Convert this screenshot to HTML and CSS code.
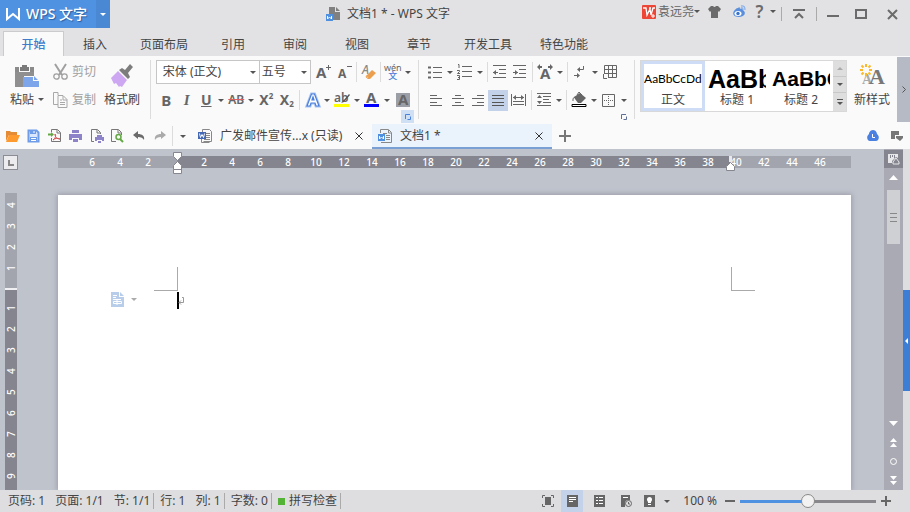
FILE: index.html
```html
<!DOCTYPE html>
<html lang="zh-CN">
  <head>
    <meta charset="UTF-8" />
    <meta name="viewport" content="width=device-width, initial-scale=1.0" />
    <title>文档1 * - WPS 文字</title>
    <link rel="stylesheet" href="styles.css">
  </head>
  <body>
    <header class="header">
      <div class="titlebar">
        <button class="brand">
          <svg width="14" height="12" viewBox="0 0 14 12"><path d="M1 0v11l6-5 6 5V0" fill="none" stroke="#fff" stroke-width="2"/></svg>
          WPS 文字
        </button>
        <button class="brand-menu drop" aria-label="菜单"></button>
        <div class="title">
          <svg width="14" height="14" viewBox="0 0 14 14"><path d="M3 0h6v5h5v8H3z" fill="#808080"/><path d="M10 0l4 4h-4z" fill="#808080"/><path d="M0 7h7v7H0z" fill="#4f91e0"/><path d="M1.500 9v3l2-2 2 2V9" fill="none" stroke="#fff"/></svg>
          <span>文档1 * - WPS 文字</span>
        </div>
        <div class="tools">
          <svg class="raised" width="14" height="14" viewBox="0 0 14 14"><rect width="14" height="14" rx="1" fill="#ee4636"/><path d="M1 3h3l1 7 3-6 1 6 2-7h2M7 3h2" fill="none" stroke="#fff" stroke-width="1.300"/><path d="M9 11h4M11 9v4" stroke="#fff"/></svg>
          <button class="user raised">袁远尧</button>
          <button class="drop raised" aria-label="账号"></button>
          <button class="raised" aria-label="皮肤"><svg width="13" height="12" viewBox="0 0 13 12"><path d="M3 0h2q1.500 2 3 0h2l3 3-2 3-1-1v7H3V5L2 6 0 3z" fill="#6b6b6b"/></svg></button>
          <button class="raised" aria-label="微博"><svg width="13" height="13" viewBox="0 0 13 13"><path d="M5 3c1-1 2-1 2 1 2-1 3 0 3 1 4 3 1 7-4 7C1 12-1 9 1 6c1-1 2-3 4-3z" fill="#5a8fdd"/><ellipse cx="5" cy="8.500" rx="3.500" ry="2.500" fill="#fff"/><circle cx="5" cy="8.500" r="1.700" fill="#3873cc"/><path d="M8 1q4-1 4 4M8 3q2-1 2 2" fill="none" stroke="#8db3ea" stroke-width="1.300"/></svg></button>
          <button class="help raised">?</button>
          <button class="drop raised" aria-label="帮助"></button>
          <i class="bar"></i>
          <button aria-label="收起功能区"><svg width="12" height="10" viewBox="0 0 12 10"><path d="M0 1h12M2 9l4-4 4 4" fill="none" stroke="#6b6b6b" stroke-width="2"/></svg></button>
          <i class="bar"></i>
          <button aria-label="最小化"><svg width="12" height="6" viewBox="0 0 12 6"><path d="M0 4h12v2H0z" fill="#6b6b6b"/></svg></button>
          <button aria-label="最大化"><svg width="12" height="10" viewBox="0 0 12 10"><path d="M1 1h10v8H1z" fill="none" stroke="#6b6b6b" stroke-width="2"/></svg></button>
          <button aria-label="关闭"><svg width="11" height="11" viewBox="0 0 11 11"><path d="M1 1l9 9M10 1l-9 9" stroke="#6b6b6b" stroke-width="2"/></svg></button>
        </div>
      </div>
      <nav class="tabs">
        <a href="#" class="active">开始</a>
        <a href="#">插入</a>
        <a href="#">页面布局</a>
        <a href="#">引用</a>
        <a href="#">审阅</a>
        <a href="#">视图</a>
        <a href="#">章节</a>
        <a href="#">开发工具</a>
        <a href="#">特色功能</a>
      </nav>
    </header>

    <section class="ribbon">
      <div class="group clipboard">
        <button class="big">
          <svg width="24" height="24" viewBox="0 0 24 24"><path d="M0 3h4v5h11V3h4v9H9v11H0z" fill="#8a8a8a"/><path d="M0 8h19v4H8v11H0z" fill="#8f8f8f"/><path d="M5 3h2V1h5v2h2v4H5z" fill="#7a7a7a"/><path d="M8 13h10v4h6v6H8z" fill="#7da5ea"/><path d="M19 12l4 4h-4z" fill="#7da5ea"/></svg>
          <span>粘贴<i class="caret"></i></span>
        </button>
        <div class="stack">
          <button class="small"><svg width="15" height="16" viewBox="0 0 15 16"><path d="M2 0l7 11M13 0L6 11" stroke="#a0a0a0" stroke-width="2"/><g fill="none" stroke="#a0a0a0" stroke-width="1.300"><circle cx="3.500" cy="12.500" r="2.700"/><circle cx="11.500" cy="12.500" r="2.700"/></g></svg>剪切</button>
          <button class="small"><svg width="15" height="16" viewBox="0 0 15 16"><path d="M5 3V.5H.5v12H5M5 3.500h5l4 4v8H5zM10 4v4h4M7 8h2M7 10.500h5M7 12.500h5" fill="none" stroke="#a8a8a8"/></svg>复制</button>
        </div>
        <button class="big">
          <svg width="24" height="24" viewBox="0 0 24 24"><path d="M9 6l3-2 3 2 5-6 3 3-5 6 2 4-2 2z" fill="#7d7d7d"/><path d="M8 7l9 9-5 7-2-1-1 1-3-4-2 1-3-6z" fill="#cda7f2"/></svg>
          <span>格式刷</span>
        </button>
      </div>

      <div class="group font">
        <div class="row font-top">
          <label class="combo"><select aria-label="字体"><option>宋体 (正文)</option></select></label>
          <label class="combo size"><select aria-label="字号"><option>五号</option></select></label>
          <button aria-label="增大字号"><svg width="16" height="16" viewBox="0 0 16 16"><text x="0" y="14" class="glyph">A</text><path d="M10 3.500h5M12.500 1v5" stroke="#666"/></svg></button>
          <button aria-label="减小字号"><svg width="16" height="16" viewBox="0 0 16 16"><text x="1" y="14" class="glyph sm">A</text><path d="M10 2.500h5" stroke="#666"/></svg></button>
          <i class="sep"></i>
          <button aria-label="清除格式"><svg width="16" height="16" viewBox="0 0 16 16"><text x="1" y="10" class="glyph sm light">A</text><path d="M5 12l6-6 4 3-6 6H7z" fill="#eca04f"/><path d="M5.500 12l3 2.500H7l-2-1.500z" fill="#fff" stroke="#eca04f"/></svg></button>
          <i class="sep"></i>
          <button class="pinyin"><span>wén</span><b>文</b></button>
          <button class="drop" aria-label="拼音"></button>
        </div>
        <div class="row font-bottom">
          <button class="letter">B</button>
          <button class="letter italic">I</button>
          <button class="letter under">U</button>
          <button class="drop" aria-label="下划线"></button>
          <button class="strike">AB</button>
          <button class="drop" aria-label="删除线"></button>
          <button class="letter script">X<sup>2</sup></button>
          <button class="letter script">X<sub>2</sub></button>
          <i class="sep"></i>
          <button aria-label="文字效果"><svg width="16" height="16" viewBox="0 0 16 16"><path d="M2 14L6.500 2h3L14 14h-3l-1-3H6l-1 3zM7 8h2L8 5z" fill="#fff" stroke="#a8c4f2" stroke-width="3"/><path d="M2 14L6.500 2h3L14 14h-3l-1-3H6l-1 3zM7 8h2L8 5z" fill="#fff" stroke="#4a7edb" stroke-width="1.200"/></svg></button>
          <button class="drop" aria-label="效果选项"></button>
          <button aria-label="突出显示"><svg width="16" height="16" viewBox="0 0 16 16"><text x="0" y="10" class="glyph ab">ab</text><path d="M15 2l-6 7-2 2 3-1 6-7z" fill="#555"/><path d="M0 12h15v3H0z" fill="#ff0"/></svg></button>
          <button class="drop" aria-label="突出显示颜色"></button>
          <button aria-label="字体颜色"><svg width="16" height="16" viewBox="0 0 16 16"><text x="2" y="11" class="glyph">A</text><path d="M0 12h15v3H0z" fill="#00f"/></svg></button>
          <button class="drop" aria-label="颜色选项"></button>
          <button aria-label="字符底纹"><svg width="14" height="14" viewBox="0 0 14 14"><path d="M0 0h14v14H0z" fill="#9b9fa5"/><text x="2" y="12" class="glyph">A</text></svg></button>
        </div>
        <button class="launcher on" aria-label="字体设置"><svg width="6" height="6" viewBox="0 0 6 6"><path d="M.5 5V.5H5M2.500 5.500h3v-3" fill="none" stroke="#4a83dd"/></svg></button>
      </div>

      <div class="group para">
        <div class="row para-top">
          <button aria-label="项目符号"><svg width="14" height="14" viewBox="0 0 14 14"><path d="M0 2.500h3M0 7.500h3M0 12.500h3" stroke="#666" stroke-width="2"/><path d="M5 2.500h9M5 7.500h9M5 12.500h9" stroke="#666"/></svg></button>
          <button class="drop" aria-label="符号选项"></button>
          <button aria-label="编号"><svg width="15" height="16" viewBox="0 0 15 16"><path d="M1 .5h1V4M0 6.500h2.500v1L.5 9.500H3M0 11.500h2.500v4H0M1 13.500h1" fill="none" stroke="#666"/><path d="M5 2.500h10M5 7.500h10M5 12.500h10" stroke="#666"/></svg></button>
          <button class="drop" aria-label="编号选项"></button>
          <i class="sep"></i>
          <button aria-label="减少缩进"><svg width="13" height="14" viewBox="0 0 13 14"><path d="M0 .5h13M6 4.500h7M6 8.500h7M0 12.500h13M0 7.500h5" stroke="#666"/><path d="M3 5v5L0 7.500z" fill="#666"/></svg></button>
          <button aria-label="增加缩进"><svg width="13" height="14" viewBox="0 0 13 14"><path d="M0 .5h13M6 4.500h7M6 8.500h7M0 12.500h13M0 7.500h5" stroke="#666"/><path d="M2 5v5l3-2.500z" fill="#666"/></svg></button>
          <i class="sep"></i>
          <button aria-label="中文版式"><svg width="16" height="16" viewBox="0 0 16 16"><text x="3" y="15" class="glyph">A</text><path d="M0 3l3-3v2h2v2H3v2zM16 3l-3-3v2h-2v2h2v2z" fill="#666"/></svg></button>
          <button class="drop" aria-label="版式选项"></button>
          <i class="sep"></i>
          <button aria-label="显示段落标记"><svg width="12" height="14" viewBox="0 0 12 14"><path d="M9.500 1v3.500H4M0 10.500h5" fill="none" stroke="#666"/><path d="M6 2v5L3 4.500zM3 8v5l3-2.500z" fill="#666"/></svg></button>
          <button class="drop" aria-label="标记选项"></button>
          <button aria-label="表格"><svg width="14" height="14" viewBox="0 0 14 14"><path d="M1.500 9V.5h12v12H5M5.500 0v13M9.500 0v13M1 4.500h13M1 8.500h13M.5 9v4.500H4" fill="none" stroke="#666"/></svg></button>
        </div>
        <div class="row para-bottom">
          <button aria-label="左对齐"><svg width="12" height="12" viewBox="0 0 12 12"><path d="M0 1.500h7M0 4.500h12M0 8.500h7M0 11.500h12" stroke="#666"/></svg></button>
          <button aria-label="居中"><svg width="12" height="12" viewBox="0 0 12 12"><path d="M3 1.500h6M0 4.500h12M3 8.500h6M0 11.500h12" stroke="#666"/></svg></button>
          <button aria-label="右对齐"><svg width="12" height="12" viewBox="0 0 12 12"><path d="M5 1.500h7M0 4.500h12M5 8.500h7M0 11.500h12" stroke="#666"/></svg></button>
          <button class="pressed" aria-label="两端对齐"><svg width="12" height="12" viewBox="0 0 12 12"><path d="M0 1.500h12M0 4.500h12M0 8.500h12M0 11.500h12" stroke="#555"/></svg></button>
          <button aria-label="分散对齐"><svg width="15" height="12" viewBox="0 0 15 12"><path d="M.5 0v12M14.500 0v12M2 3.500h11M2 7.500h11M2 10.500h11" stroke="#666"/><path d="M2 3.500L5 1v5zM13 3.500L10 1v5z" fill="#666"/></svg></button>
          <i class="sep"></i>
          <button aria-label="行距"><svg width="14" height="14" viewBox="0 0 14 14"><path d="M0 .5h14M6 3.500h8M6 6.500h6M6 9.500h8M0 12.500h14" stroke="#666"/><path d="M0 5h5L2.500 2zM0 8h5l-2.500 3z" fill="#666"/></svg></button>
          <button class="drop" aria-label="行距选项"></button>
          <i class="sep"></i>
          <button aria-label="底纹颜色"><svg width="16" height="16" viewBox="0 0 16 16"><path d="M3 5l6-4 6 5-5 5H7L4 7z" fill="#666"/><path d="M6 3l2-3 3 3M4 5q-3 1-2 4" fill="none" stroke="#666"/><path d="M1 12.500h14v2H1z" fill="#fff" stroke="#000"/></svg></button>
          <button class="drop" aria-label="底纹选项"></button>
          <button aria-label="边框"><svg width="13" height="13" viewBox="0 0 13 13"><path d="M.5.5h12v12H.5z" fill="none" stroke="#666"/><path d="M6.500 2v9M2 6.500h9" stroke="#666" stroke-dasharray="1 1"/></svg></button>
          <button class="drop" aria-label="边框选项"></button>
        </div>
        <button class="launcher" aria-label="段落设置"><svg width="6" height="6" viewBox="0 0 6 6"><path d="M.5 5V.5H5M2.500 5.500h3v-3" fill="none" stroke="#5f6f94"/></svg></button>
      </div>

      <div class="group styles">
        <div class="gallery">
          <button class="style current"><span class="sample">AaBbCcDd</span><span>正文</span></button>
          <button class="style"><span class="sample h1">AaBb</span><span>标题 1</span></button>
          <button class="style"><span class="sample h2">AaBbC</span><span>标题 2</span></button>
          <div class="spin">
            <button class="drop up" aria-label="上一行"></button>
            <button class="drop" aria-label="下一行"></button>
            <button class="drop more" aria-label="更多样式"></button>
          </div>
        </div>
        <button class="big new-style">
          <svg width="24" height="24" viewBox="0 0 24 24"><text x="2" y="20" class="serif pale">A</text><text x="9" y="20" class="serif">A</text><path d="M6 0v3M6 9v3M0 6h3M9 6h3M1.500 1.500l2 2M8.500 8.500l2 2M10.500 1.500l-2 2M3.500 8.500l-2 2" stroke="#fbb829" stroke-width="2"/></svg>
          <span>新样式</span>
        </button>
      </div>
      <button class="expand" aria-label="展开"><svg width="4" height="7" viewBox="0 0 4 7"><path d="M.5.5l3 3-3 3" fill="none" stroke="#555"/></svg></button>
    </section>

    <section class="docbar">
      <div class="quick">
        <button aria-label="打开"><svg width="15" height="12" viewBox="0 0 15 12"><path d="M1 11V1h4l1 1h6v3H4z" fill="#e58a35"/><path d="M4 5h11l-3 7H1z" fill="#ff9a2e"/></svg></button>
        <button aria-label="保存"><svg width="13" height="14" viewBox="0 0 13 14"><path d="M1.500 1.500h8l2 2v9h-10z" fill="#d9e6fb" stroke="#6f9ce8" stroke-width="2"/><path d="M3 2h6v3H3zM3 8h7v5H3z" fill="#6f9ce8"/><path d="M4 9.500h5M4 11.500h5M7 2v2" stroke="#fff"/></svg></button>
        <button aria-label="输出为PDF"><svg width="14" height="14" viewBox="0 0 14 14"><path d="M3.500 3V.5h6l3 3v9h-9V9M9 1v3h3" fill="none" stroke="#777"/><path d="M5 11c3-2 3-5 2-6 0 4 3 5 5 5-2-1-5-1-7 1z" fill="none" stroke="#dc4a4a"/><path d="M0 5.500h4" stroke="#63a844" stroke-width="2"/><path d="M3 3l3 2.500L3 8z" fill="#63a844"/></svg></button>
        <button aria-label="打印"><svg width="13" height="12" viewBox="0 0 13 12"><path d="M3 0h7v3H3zM0 4h13v6h-3V8H3v2H0zM4 9h5v3H4z" fill="#8c83c9"/></svg></button>
        <button aria-label="打印预览"><svg width="14" height="14" viewBox="0 0 14 14"><path d="M4 12.500H1.500V.5h6l3 3V5M7 1v3h3" fill="none" stroke="#777"/><path d="M7 6h5v2H7zM5 8h9v4h-2v-1H7v1H5zM8 12h3v2H8z" fill="#8c83c9"/></svg></button>
        <button aria-label="查找"><svg width="13" height="14" viewBox="0 0 13 14"><path d="M5 12.500H.5V.5h7l3 3V6M7 1v3h3" fill="none" stroke="#777"/><circle cx="7.500" cy="8" r="2.500" fill="none" stroke="#63a844" stroke-width="1.500"/><path d="M9 10l3 3" stroke="#63a844" stroke-width="2"/></svg></button>
        <button aria-label="撤销"><svg width="12" height="10" viewBox="0 0 12 10"><path d="M0 4l5-4v3c4 0 7 2 6 6-1-2-3-3-6-3v2z" fill="#6b6b6b"/></svg></button>
        <button aria-label="重做"><svg width="12" height="10" viewBox="0 0 12 10"><path d="M12 4L7 0v3C3 3 0 5 1 9c1-2 3-3 6-3v2z" fill="#aaa"/></svg></button>
        <i class="sep"></i>
        <button class="drop" aria-label="自定义快速访问"></button>
      </div>
      <div class="doc">
        <svg width="14" height="14" viewBox="0 0 14 14"><path d="M4.500 3V.5h7l2 2v10h-8M6 4.500h6M8 6.500h4M8 8.500h4M6 10.500h6M3.500 10v3.500h8" fill="none" stroke="#888"/><path d="M0 3h8v7H0z" fill="#4468b4"/><path d="M1.500 4.500l1 4 1.500-3 1.500 3 1-4" fill="none" stroke="#fff"/></svg>
        <a href="#">广发邮件宣传...x (只读)</a>
        <button aria-label="关闭文档"><svg width="8" height="8" viewBox="0 0 8 8"><path d="M.5.5l7 7M7.500.5l-7 7" stroke="#333"/></svg></button>
      </div>
      <div class="doc open">
        <svg width="14" height="14" viewBox="0 0 14 14"><path d="M2.500 4V.5h8l3 3v10H3M10.500 1v3H13M5 4.500h4M8 6.500h4M8 8.500h4M8 10.500h4" fill="none" stroke="#888"/><path d="M0 5h7v7H0z" fill="#4f91e0"/><path d="M1.500 7v3l2-2 2 2V7" fill="none" stroke="#fff"/></svg>
        <a href="#">文档1 *</a>
        <button aria-label="关闭文档"><svg width="8" height="8" viewBox="0 0 8 8"><path d="M.5.5l7 7M7.500.5l-7 7" stroke="#333"/></svg></button>
      </div>
      <button class="add" aria-label="新建文档"><svg width="12" height="12" viewBox="0 0 12 12"><path d="M0 6h12M6 0v12" stroke="#777" stroke-width="2"/></svg></button>
      <div class="docbar-end">
        <button aria-label="云文档"><svg width="12" height="12" viewBox="0 0 12 12"><path d="M6 0c3 0 4 3 4 4 3 2 2 7-1 7H3c-3 0-4-5-1-7 0-1 1-4 4-4z" fill="#4a80e0"/><path d="M5.500 4v3.500H8" fill="none" stroke="#fff"/></svg></button>
        <button aria-label="任务窗格"><svg width="12" height="11" viewBox="0 0 12 11"><path d="M0 0h8v4H4v4H0zM5 5h7v2l-3 3-4-3z" fill="#777"/></svg></button>
      </div>
    </section>

    <main class="workspace">
      <div class="left">
        <button class="tabstop" aria-label="制表位"><svg width="6" height="6" viewBox="0 0 6 6"><path d="M1 0v5h5" fill="none" stroke="#888" stroke-width="2"/></svg></button>
        <div class="vruler">
          <span>4</span><span>3</span><span>2</span><span>1</span><span class="zero"></span><span>1</span><span>2</span><span>3</span><span>4</span><span>5</span><span>6</span><span>7</span><span>8</span><span>9</span>
        </div>
      </div>
      <div class="canvas">
        <div class="ruler">
          <span>6</span><span>4</span><span>2</span><span></span><span>2</span><span>4</span><span>6</span><span>8</span><span>10</span><span>12</span><span>14</span><span>16</span><span>18</span><span>20</span><span>22</span><span>24</span><span>26</span><span>28</span><span>30</span><span>32</span><span>34</span><span>36</span><span>38</span><span>40</span><span>42</span><span>44</span><span>46</span>
          <svg class="indent" width="9" height="22" viewBox="0 0 9 22"><path d="M.5.5h8v4l-4 4-4-4zM.5 17.500v-4l4-4 4 4v8h-8v-4h8" fill="#fff" stroke="#85868f"/></svg>
          <svg class="indent right" width="9" height="15" viewBox="0 0 9 15"><path d="M3 0h3v6H3z" fill="#e8e9ec"/><path d="M.5 14.500v-4l4-4 4 4v4z" fill="#fff" stroke="#85868f"/></svg>
        </div>
        <div class="page">
          <i class="corner"></i>
          <i class="corner end"></i>
          <button class="smart" aria-label="段落布局"><svg width="13" height="15" viewBox="0 0 13 15"><path d="M0 0h8v5h5v10H0z" fill="#b8cdea"/><path d="M9 0l4 4H9z" fill="#b8cdea"/><path d="M2 3.500h4M2 5.500h3M2 7.500h8M2.500 9.500h8v2h-8zM6 8v5" fill="none" stroke="#fff"/></svg><i class="caret"></i></button>
          <p class="line"><svg width="5" height="8" viewBox="0 0 5 8"><path d="M3 .5h1.500v5H0M2 3.500L0 5.500l2 2" fill="none" stroke="#999"/></svg></p>
        </div>
      </div>
      <div class="scroll">
        <button class="ruler-toggle" aria-label="标尺"><svg width="12" height="11" viewBox="0 0 12 11"><path d="M0 0h10v4L8 3 4 7v2H0z" fill="#e8e8ea"/><path d="M2.500 1v3M4.500 1v2M6.500 1v3" stroke="#84858e"/><path d="M5 8l3-4 3 4v2H5z" fill="#84858e" stroke="#e8e8ea"/></svg></button>
        <button class="step" aria-label="向上"><svg width="9" height="5" viewBox="0 0 9 5"><path d="M0 5h9L4.500 0z" fill="#fff"/></svg></button>
        <div class="thumb"><svg width="7" height="9" viewBox="0 0 7 9"><path d="M0 .5h7M0 4.500h7M0 8.500h7" stroke="#888"/></svg></div>
        <div class="nav">
          <button aria-label="向下"><svg width="9" height="5" viewBox="0 0 9 5"><path d="M0 0h9L4.500 5z" fill="#fff"/></svg></button>
          <button aria-label="上一页"><svg width="9" height="9" viewBox="0 0 9 9"><path d="M1 4h7L4.500 0zM1 9h7L4.500 5z" fill="#fff"/></svg></button>
          <button aria-label="选择浏览对象"><svg width="7" height="7" viewBox="0 0 7 7"><circle cx="3.500" cy="3.500" r="3" fill="none" stroke="#fff"/></svg></button>
          <button aria-label="下一页"><svg width="9" height="9" viewBox="0 0 9 9"><path d="M1 0h7L4.500 4zM1 5h7L4.500 9z" fill="#fff"/></svg></button>
        </div>
      </div>
      <div class="side"><button aria-label="展开任务窗格"><svg width="3" height="6" viewBox="0 0 3 6"><path d="M3 0v6L0 3z" fill="#fff"/></svg></button></div>
    </main>

    <footer class="status">
      <div class="counts">
        <span>页码: 1</span>
        <span>页面: 1/1</span>
        <span class="cut">节: 1/1</span>
        <span>行: 1</span>
        <span class="cut">列: 1</span>
        <span class="cut">字数: 0</span>
        <span class="cut spell">拼写检查</span>
      </div>
      <div class="views">
        <button aria-label="全屏"><svg width="12" height="12" viewBox="0 0 12 12"><path d="M3 2h6v8H3z" fill="#666"/><path d="M.5 3V.5H3M9 .5h2.500V3M11.500 9v2.500H9M3 11.500H.5V9" fill="none" stroke="#666"/></svg></button>
        <button class="pressed" aria-label="页面视图"><svg width="11" height="12" viewBox="0 0 11 12"><path d="M0 0h11v12H0z" fill="#666"/><path d="M2 2.500h7M2 4.500h7M2 6.500h4" stroke="#fff"/></svg></button>
        <button aria-label="大纲"><svg width="11" height="12" viewBox="0 0 11 12"><path d="M0 0h11v12H0z" fill="#666"/><path d="M2 2.500h2M5 2.500h4M2 5.500h2M5 5.500h4M2 8.500h2M5 8.500h4" stroke="#fff"/></svg></button>
        <button aria-label="Web版式"><svg width="11" height="12" viewBox="0 0 11 12"><path d="M0 0h9v5H6L4 7v5H0z" fill="#666"/><path d="M2 2.500h5" stroke="#fff"/><circle cx="7.500" cy="8.500" r="3" fill="#dedee0" stroke="#666"/><path d="M7.500 7v2H9" fill="none" stroke="#666"/></svg></button>
        <button aria-label="护眼模式"><svg width="11" height="12" viewBox="0 0 11 12"><path d="M0 0h11v12H0z" fill="#666"/><circle cx="5.500" cy="4.500" r="2.500" fill="#fff"/><path d="M4 6h3v2H4zM4 9h3v1H4z" fill="#fff"/></svg></button>
        <button class="drop" aria-label="视图选项"></button>
      </div>
      <label class="percent" for="zoom">100 %</label>
      <button class="zoom-step" aria-label="缩小"><svg width="10" height="10" viewBox="0 0 10 10"><path d="M0 5h10" stroke="#666" stroke-width="2"/></svg></button>
      <input type="range" id="zoom" min="0" max="200" value="100">
      <button class="zoom-step" aria-label="放大"><svg width="10" height="10" viewBox="0 0 10 10"><path d="M0 5h10M5 0v10" stroke="#666" stroke-width="2"/></svg></button>
    </footer>
  </body>
</html>
```
FILE: styles.css
```css
* {
  box-sizing: border-box;
}
body {
  margin: 0;
  height: 100vh;
  display: flex;
  flex-direction: column;
  overflow: hidden;
  background-color: #e2e2e4;
  color: #444;
  font-family: "Noto Sans", "Noto Sans CJK SC", sans-serif;
  font-size: 12px;
  line-height: 16px;
}
button,
select {
  margin: 0;
  padding: 0;
  border: 0;
  background: none;
  color: inherit;
  font: inherit;
}
button {
  display: flex;
  align-items: center;
  justify-content: center;
  white-space: nowrap;
}
a {
  color: inherit;
  text-decoration: none;
}
svg {
  display: block;
  flex: none;
  overflow: visible;
}

/* small triangles */
.caret,
.drop::before {
  content: "";
  display: inline-block;
  border: 3px solid transparent;
  border-top-color: #555;
  border-bottom: 0;
}
.sep {
  width: 1px;
  height: 20px;
  background-color: #dcdcdc;
}
.pressed {
  background-color: #c3d2e9;
}

/* title bar */
.titlebar {
  display: flex;
  height: 28px;
}
.brand {
  width: 96px;
  gap: 6px;
  padding-right: 3px;
  background-color: #4f92e2;
  color: #fff;
  font-size: 14px;
  font-weight: 500;
  text-shadow: 1px 1px 1px #2c5f9f;
}
.brand-menu {
  width: 14px;
  background-color: #4a88d3;
}
.brand-menu::before {
  border-top-color: #fff;
}
.title {
  flex: 1;
  display: flex;
  align-items: center;
  justify-content: center;
  gap: 7px;
  padding-left: 26px;
}
.tools {
  display: grid;
  grid-template-columns: 18px 36px 6px 28px 22px 19px 8px 8px 28px 6px 28px 27px 36px;
  align-items: center;
  justify-items: center;
}
.raised {
  margin-bottom: 5px;
}
.user {
  color: #666;
}
.help {
  color: #6b6b6b;
  font-size: 17px;
  font-weight: 600;
}
.bar {
  width: 1px;
  height: 14px;
  background-color: #aaa;
}

.tabs {
  display: flex;
  height: 28px;
  padding: 3px 3px 0;
}
.tabs a {
  min-width: 62px;
  padding: 6px 14px 0;
  text-align: center;
}
.tabs .active {
  min-width: 61px;
  padding: 5px 12px 0;
  border: 1px solid #cbcbcd;
  border-bottom: 0;
  background-color: #fafafa;
  color: #3f7dcb;
  font-weight: 500;
}

/* ribbon */
.ribbon {
  display: flex;
  height: 67px;
  background-color: #fafafa;
}
.group {
  position: relative;
  margin: 4px 0;
  padding-left: 5px;
  border-left: 1px solid #dcdcdc;
}
.clipboard {
  display: flex;
  width: 150px;
  padding-left: 0;
  border-left: 0;
}
.font {
  width: 269px;
}
.para {
  width: 216px;
}
.styles {
  display: flex;
}
.big {
  width: 50px;
  flex-direction: column;
  justify-content: flex-start;
  gap: 4px;
  padding-top: 4px;
}
.clipboard .big:first-child {
  padding-left: 4px;
}
.clipboard .big:last-child {
  width: 44px;
}
.big .caret {
  margin: 0 0 3px 4px;
}
.stack {
  width: 47px;
  margin-left: 3px;
}
.small {
  height: 24px;
  gap: 4px;
  margin-bottom: 4px;
  color: #a0a0a0;
}
.row {
  display: grid;
  height: 24px;
  margin-bottom: 4px;
  align-items: center;
}
.row .sep {
  justify-self: center;
}
.font-top {
  grid-template-columns: 104px 51px 26px 17px 5px 20px 4px 20px 10px;
}
.font-bottom {
  grid-template-columns: 21px 20px 19px 10px 21px 9px 21px 20px 6px 20px 9px 21px 9px 21px 9px 22px;
}
.para-top {
  grid-template-columns: 21px 9px 21px 9px 6px 19px 21px 4px 21px 9px 6px 20px 9px 22px;
}
.para-bottom {
  grid-template-columns: 23px 21px 20px 20px 20px 6px 20px 9px 6px 20px 9px 21px 9px;
}
.para-bottom .pressed {
  height: 21px;
}
.combo {
  position: relative;
  height: 24px;
  border: 1px solid #c6c6c6;
  background-color: #fff;
}
.combo.size {
  border-left: 0;
}
.combo select {
  width: 100%;
  height: 22px;
  padding-left: 6px;
  appearance: none;
}
.combo.size select {
  padding-left: 2px;
}
.combo::after {
  content: "";
  position: absolute;
  right: 3px;
  top: 10px;
  border: 3px solid transparent;
  border-top-color: #555;
  border-bottom: 0;
  pointer-events: none;
}
.glyph {
  fill: #666;
  font-family: "Noto Sans", sans-serif;
  font-size: 15px;
  font-weight: 700;
}
.glyph.sm {
  font-size: 12px;
}
.glyph.ab {
  font-size: 12px;
  font-weight: 600;
}
.glyph.light {
  fill: #888;
  font-weight: 500;
  font-style: italic;
}
.pinyin {
  flex-direction: column;
  color: #666;
  font-size: 9px;
  line-height: 8px;
}
.pinyin b {
  color: #4a80d8;
  font-weight: 500;
}
.letter {
  color: #666;
  font-size: 15px;
  font-weight: 700;
}
.italic {
  font-family: "Liberation Serif", serif;
  font-style: italic;
}
.under {
  font-size: 14px;
  text-decoration: underline;
}
.strike {
  color: #666;
  font-weight: 600;
  text-decoration: line-through #e06060;
}
.script {
  font-size: 14px;
}
.script sup,
.script sub {
  font-size: 8px;
  line-height: 8px;
}
.script sup {
  margin-bottom: 8px;
}
.script sub {
  margin-top: 8px;
}
.launcher {
  position: absolute;
  right: 4px;
  bottom: -4px;
  width: 13px;
  height: 13px;
}
.launcher.on {
  background-color: #cfdff4;
}

.gallery {
  display: flex;
  height: 52px;
  border: 1px solid #d8d8d8;
  background-color: #fff;
}
.style {
  width: 64px;
  flex-direction: column;
  border: 3px solid transparent;
}
.style.current {
  border-color: #cfdcf5;
}
.sample {
  width: 58px;
  height: 30px;
  overflow: hidden;
  color: #000;
  font-family: Lato, sans-serif;
  font-size: 12px;
  line-height: 30px;
  text-align: left;
}
.sample.h1,
.sample.h2 {
  font-family: "Liberation Sans", sans-serif;
  font-size: 25px;
  font-weight: 700;
}
.sample.h2 {
  font-size: 21px;
}
.spin {
  display: grid;
  width: 13px;
  gap: 1px;
  background-color: #c8c8c8;
}
.spin .drop {
  background-color: #dedede;
}
.spin .up::before {
  border: 3px solid transparent;
  border-bottom-color: #aaa;
  border-top: 0;
}
.spin .more {
  flex-direction: column;
  gap: 2px;
}
.spin .more::before {
  order: 1;
}
.spin .more::after {
  content: "";
  width: 6px;
  height: 1px;
  background-color: #555;
}
.serif {
  fill: #777;
  font-family: "Liberation Serif", serif;
  font-size: 22px;
  font-weight: 700;
}
.serif.pale {
  fill: #aaa;
  font-size: 14px;
}
.expand {
  width: 13px;
  margin: 1px 0 1px auto;
  background-color: #b5bac4;
}

/* open documents */
.docbar {
  display: flex;
  height: 26px;
  background-color: #fafafa;
}
.quick {
  display: grid;
  grid-template-columns: repeat(8, 21px) 4px 18px;
  padding-left: 2px;
  align-items: center;
}
.quick .sep {
  justify-self: center;
}
.doc {
  display: flex;
  align-items: center;
  gap: 8px;
  width: 180px;
  padding: 0 9px 0 6px;
  margin-top: 1px;
  border-bottom: 2px solid transparent;
}
.doc a {
  flex: 1;
  white-space: nowrap;
}
.open {
  background-color: #eaf3fc;
  border-bottom-color: #7a9fd4;
}
.add {
  width: 26px;
}
.docbar-end {
  display: flex;
  gap: 12px;
  margin-left: auto;
  padding-right: 7px;
}

/* editing area */
.workspace {
  flex: 1;
  min-height: 0;
  display: flex;
  background-color: #bfc3cc;
}
.left {
  display: flex;
  flex-direction: column;
  gap: 23px;
  width: 25px;
  padding-top: 6px;
  overflow: hidden;
}
.tabstop {
  width: 15px;
  height: 15px;
  margin-left: 3px;
  border: 1px solid #8b8c94;
  background-color: #ececee;
}
.vruler {
  flex: 1;
  width: 12px;
  min-height: 0;
  margin-left: 5px;
  padding-top: 2px;
  background: linear-gradient(#a2a5ae 95px, #f0f0f2 95px, #f0f0f2 97px, #84858e 97px);
}
.vruler span,
.ruler span {
  color: #fff;
  font-size: 10px;
  font-weight: 500;
  line-height: 12px;
  text-align: center;
}
.vruler span {
  display: block;
  height: 21px;
  writing-mode: vertical-rl;
  transform: rotate(180deg);
}
.vruler .zero {
  height: 19px;
}
.canvas {
  flex: 1;
  min-width: 0;
  display: flex;
  flex-direction: column;
  align-items: center;
  gap: 27px;
  padding-top: 7px;
  overflow: hidden;
}
.ruler {
  position: relative;
  display: flex;
  width: 793px;
  height: 12px;
  padding-left: 20px;
  background: linear-gradient(to right, #a2a5ae 119px, #84858e 119px, #84858e 672px, #a2a5ae 672px);
}
.ruler span {
  width: 28px;
}
.indent {
  position: absolute;
  left: 115px;
  top: -4px;
}
.indent.right {
  left: 668px;
  top: 0;
}
.page {
  position: relative;
  flex: 1;
  width: 793px;
  padding: 97px 119px 0;
  background-color: #fff;
  box-shadow: 0 0 5px 1px #9a9da8;
}
.corner {
  position: absolute;
  left: 96px;
  top: 72px;
  width: 24px;
  height: 24px;
  border-right: 1px solid #aaa;
  border-bottom: 1px solid #aaa;
}
.corner.end {
  left: 673px;
  border-right: 0;
  border-left: 1px solid #aaa;
}
.smart {
  position: absolute;
  left: 53px;
  top: 97px;
  gap: 7px;
}
.smart .caret {
  border-top-color: #aaa;
}
.line {
  display: flex;
  align-items: center;
  height: 17px;
  margin: 0;
  border-left: 2px solid #000;
}

.scroll {
  display: flex;
  flex-direction: column;
  align-items: center;
  width: 19px;
  padding-top: 1px;
  background-color: #a9aab3;
}
.ruler-toggle {
  width: 19px;
  height: 18px;
  background-color: #84858e;
}
.step {
  height: 22px;
  padding-bottom: 4px;
}
.thumb {
  display: flex;
  align-items: center;
  justify-content: center;
  width: 13px;
  height: 54px;
  background-color: #cfd0d4;
}
.nav {
  margin-top: auto;
}
.nav button {
  width: 19px;
  height: 19px;
}
.side {
  display: flex;
  flex-direction: column;
  justify-content: center;
  width: 7px;
  padding-top: 42px;
  background-color: #dedee0;
}
.side button {
  height: 101px;
  background-color: #3c7ed6;
}

/* status bar */
.status {
  display: flex;
  align-items: center;
  height: 22px;
  padding-right: 17px;
  background-color: #dedee0;
}
.counts {
  flex: 1;
  display: flex;
  gap: 6px;
  padding-left: 8px;
  white-space: nowrap;
}
.counts span {
  padding-right: 4px;
}
.counts .cut {
  padding-right: 3px;
  border-right: 1px solid #aaa;
}
.spell::before {
  content: "";
  display: inline-block;
  width: 7px;
  height: 7px;
  margin-right: 4px;
  background-color: #54b336;
}
.views {
  display: grid;
  grid-template-columns: 26px 22px 32px 22px 25px 9px;
  height: 22px;
}
.percent {
  margin: 0 3px 0 12px;
  white-space: nowrap;
}
.zoom-step {
  margin: 0 5px;
}
.zoom-step:last-child {
  margin-right: 2px;
}
#zoom {
  width: 136px;
  height: 16px;
  margin: 0;
  appearance: none;
  background: linear-gradient(to right, #4f92e2 50%, #88888c 50%) center / 100% 3px no-repeat;
}
#zoom::-webkit-slider-thumb {
  appearance: none;
  width: 14px;
  height: 14px;
  border: 1px solid #888;
  border-radius: 50%;
  background-color: #f2f2f2;
}
```
